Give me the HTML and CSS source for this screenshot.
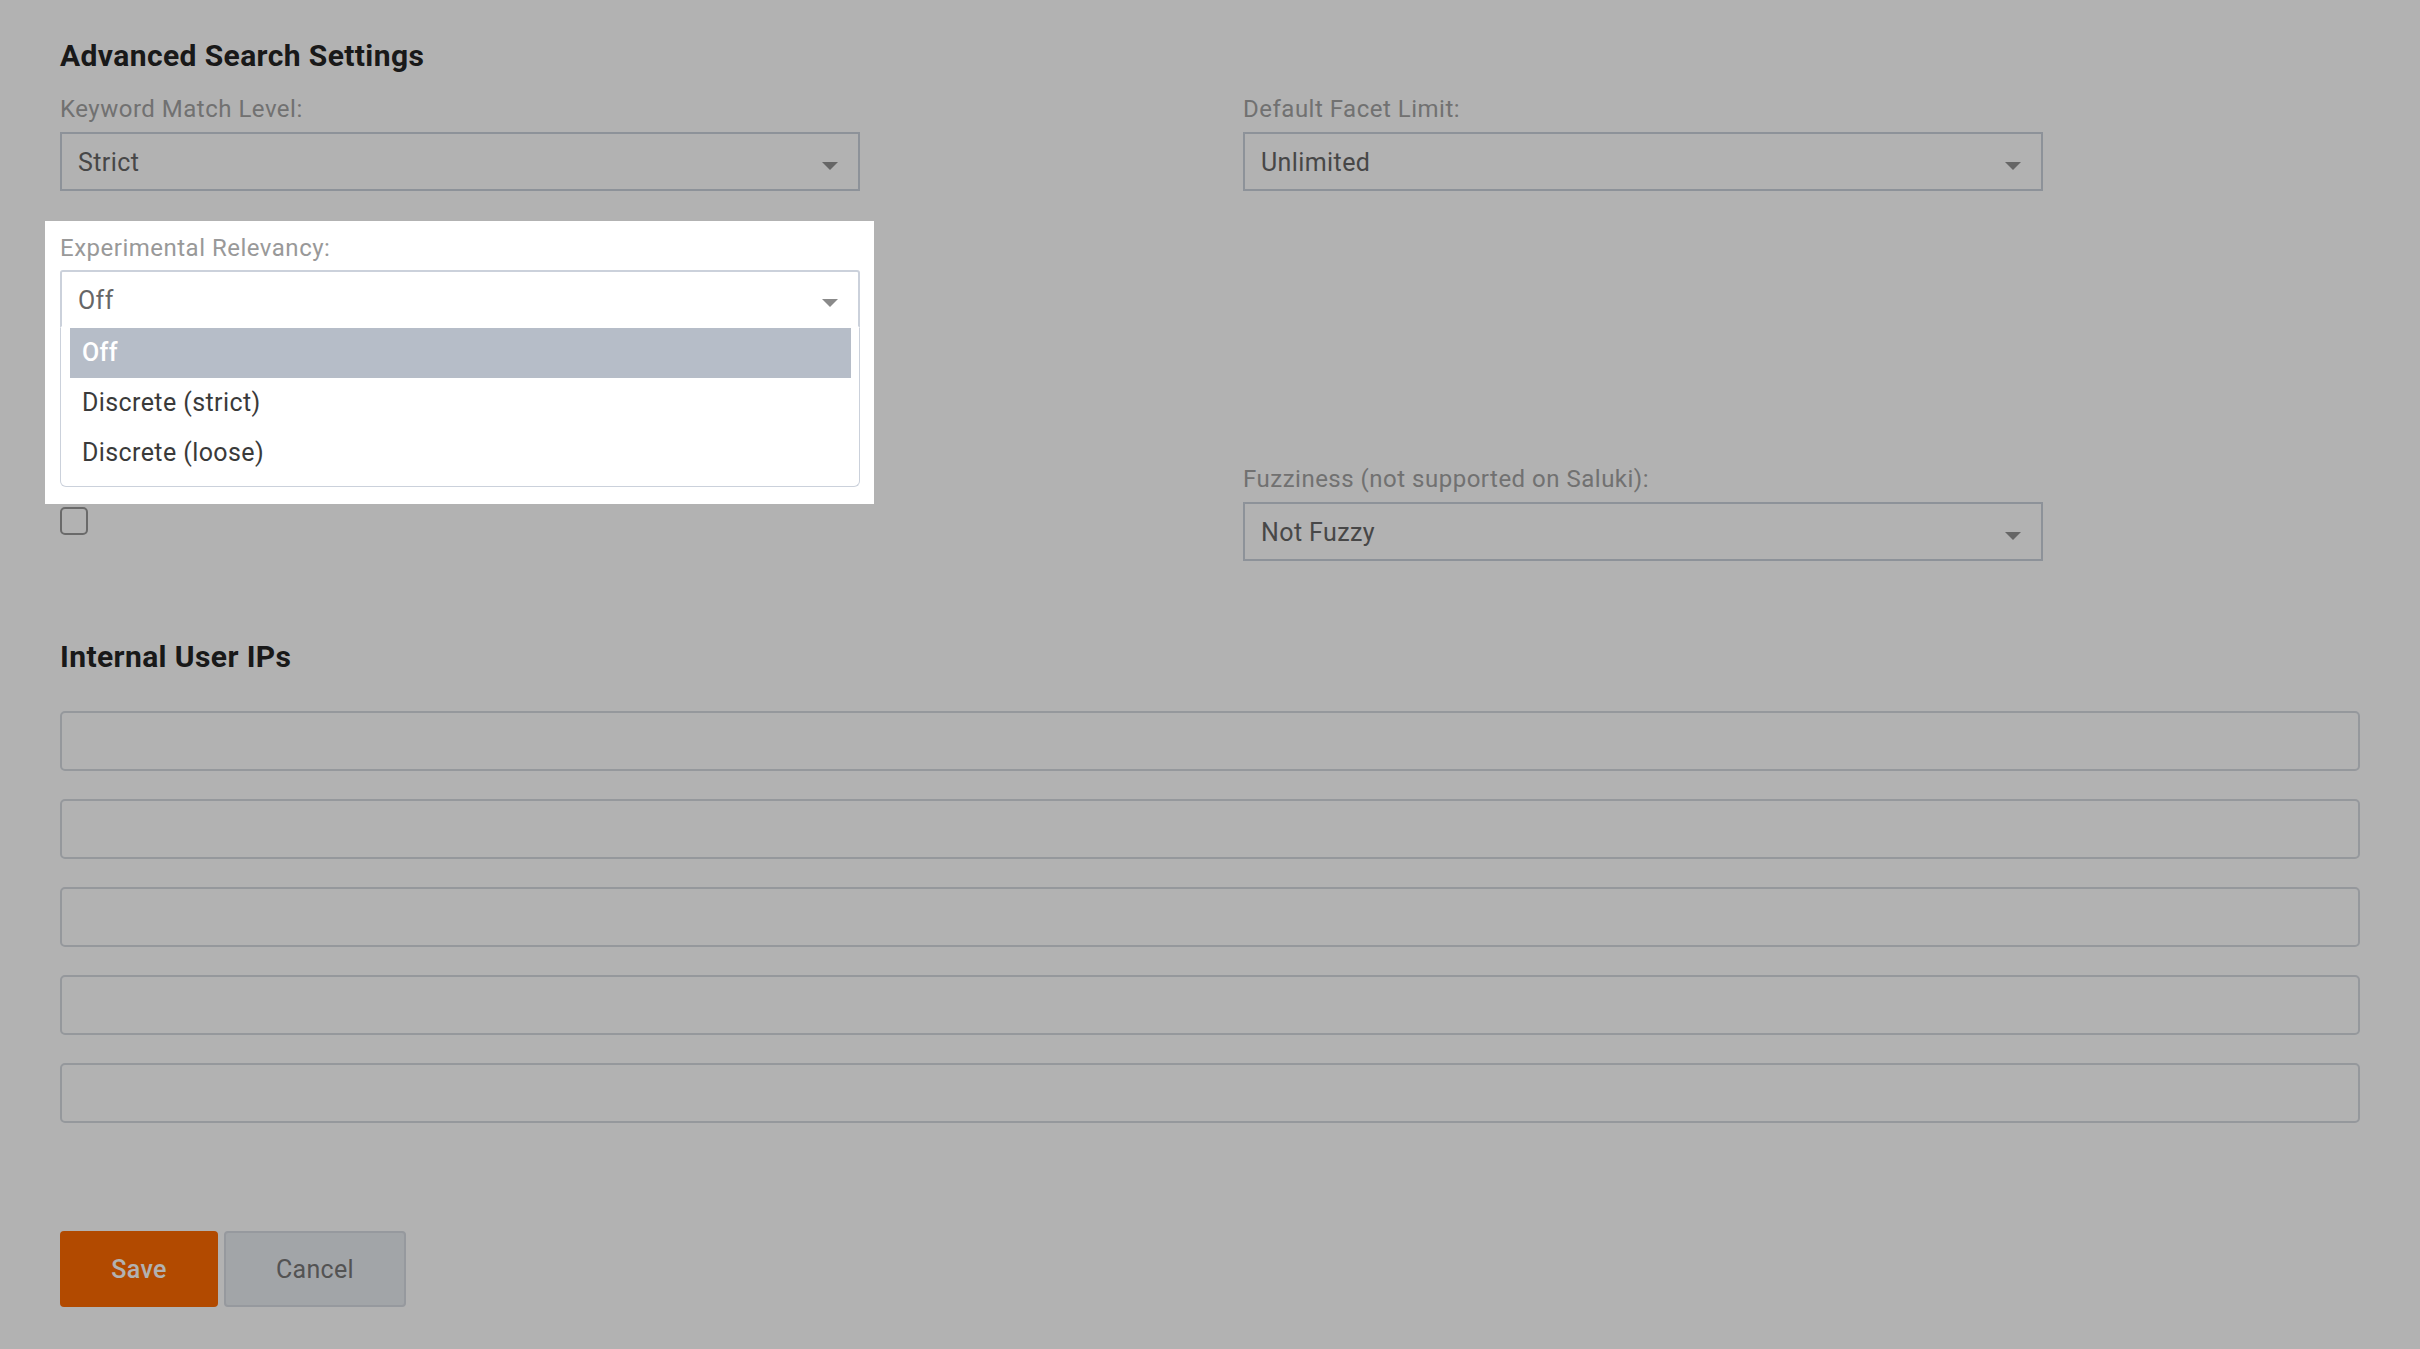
FILE: index.html
```html
<!DOCTYPE html>
<html lang="en">
<head>
    <meta charset="UTF-8">
    <meta name="viewport" content="width=device-width, initial-scale=1.0">
    <title>Advanced Search Settings</title>
    <link rel="stylesheet" href="styles.css">
</head>
<body>
    <div class="page">
        <!-- Search settings -->
        <section class="section">
            <h2>Advanced Search Settings</h2>
            <div class="settings-grid">
                <div class="field">
                    <label>Keyword Match Level:</label>
                    <div class="select"><span>Strict</span><i class="caret"></i></div>
                </div>
                <div class="field">
                    <label>Default Facet Limit:</label>
                    <div class="select"><span>Unlimited</span><i class="caret"></i></div>
                </div>

                <div class="field field-focus">
                    <label>Experimental Relevancy:</label>
                    <div class="dropdown">
                        <div class="select is-open"><span>Off</span><i class="caret"></i></div>
                        <ul class="menu">
                            <li class="is-active">Off</li>
                            <li>Discrete (strict)</li>
                            <li>Discrete (loose)</li>
                        </ul>
                    </div>
                </div>
                <div></div>

                <div class="field field-lower">
                    <label>Show Scores:</label>
                    <span class="checkbox"></span>
                </div>
                <div class="field field-lower">
                    <label>Fuzziness (not supported on Saluki):</label>
                    <div class="select"><span>Not Fuzzy</span><i class="caret"></i></div>
                </div>
            </div>
        </section>

        <!-- IP list -->
        <section class="section section-ips">
            <h2>Internal User IPs</h2>
            <div class="ip-list">
                <input type="text" class="input">
                <input type="text" class="input">
                <input type="text" class="input">
                <input type="text" class="input">
                <input type="text" class="input">
            </div>
        </section>

        <div class="actions">
            <button class="btn btn-primary">Save</button>
            <button class="btn btn-default">Cancel</button>
        </div>
    </div>

    <div class="backdrop"></div>
</body>
</html>
```

FILE: styles.css
```css
* { margin: 0; padding: 0; box-sizing: border-box; }
body { font-family: Roboto, "Liberation Sans", sans-serif; background: #fff; color: #222; }
.page { padding: 39px 60px 0 60px; }
.section h2 { font-size: 30px; line-height: 34px; font-weight: 700; letter-spacing: 0.4px; color: #252525; margin-bottom: 21px; }
.section-ips { margin-top: 79px; }
.section-ips h2 { margin-bottom: 37px; }

.settings-grid { display: grid; grid-template-columns: 1fr 1fr; column-gap: 66px; row-gap: 42px; }
.field { max-width: 800px; }
.field label { display: block; font-size: 24px; line-height: 31px; letter-spacing: 0.5px; color: #a3a3a3; margin-bottom: 7px; }
.field-lower { margin-top: 94px; }

.select { position: relative; height: 59px; border: 2px solid #cbd1db; background: #fff; display: flex; align-items: center; padding: 2px 60px 0 16px; font-size: 25px; letter-spacing: 0.4px; color: #666; }
.caret { position: absolute; right: 20px; top: 50%; margin-top: 0; width: 0; height: 0; border-left: 8px solid transparent; border-right: 8px solid transparent; border-top: 8px solid #929292; }

/* focused field sits above the backdrop */
.field-focus { position: relative; z-index: 20; }
.field-focus::before { content: ''; position: absolute; left: -15px; right: -14px; top: -12px; height: 283px; background: #fff; z-index: -1; }
.field-focus label { color: #999; margin-bottom: 6px; }
.dropdown { position: relative; }
.select.is-open { height: 58px; border-bottom-color: transparent; border-radius: 3px 3px 0 0; }
.select.is-open .caret { border-top-color: #8a8a8a; }
.menu { position: absolute; left: 0; right: 0; top: 100%; list-style: none; background: #fff; border: 1px solid #cbd1db; border-top: none; border-radius: 0 0 6px 6px; padding: 0 8px 8px 9px; }
.menu li { height: 50px; line-height: 50px; padding-left: 12px; font-size: 25px; letter-spacing: 0.4px; color: #3a3a3a; }
.menu li.is-active { background: #b6bdc8; color: #fff; font-weight: 500; }

.checkbox { display: block; width: 28px; height: 28px; border: 2px solid #999; border-radius: 5px; margin-top: 12px; }

.ip-list { display: flex; flex-direction: column; gap: 28px; }
.input { height: 60px; width: 100%; border: 2px solid #d6dae0; border-radius: 5px; background: #fff; font-family: inherit; font-size: 24px; padding: 0 16px; }

.actions { display: flex; gap: 6px; margin-top: 108px; }
.btn { height: 76px; border-radius: 4px; font-family: inherit; font-size: 25px; letter-spacing: 0.3px; cursor: pointer; }
.btn-primary { width: 158px; background: #ff6a00; border: none; color: #fff; font-weight: 500; }
.btn-default { width: 182px; background: #e9ecf1; border: 2px solid #d7dbe2; color: #777; }

.backdrop { position: fixed; top: 0; left: 0; right: 0; bottom: 0; background: rgba(0,0,0,0.3); z-index: 10; }
```
